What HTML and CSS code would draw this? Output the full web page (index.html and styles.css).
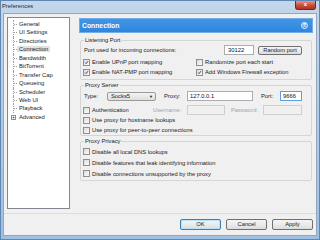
FILE: index.html
```html
<!DOCTYPE html>
<html lang="en">
<head>
  <meta charset="UTF-8">
  <title>Preferences</title>
  <link rel="stylesheet" href="styles.css">
</head>
<body>
<div class="window">
  <div class="titlebar">
    <span class="title">Preferences</span>
    <span class="close">x</span>
  </div>
  <div class="client">
    <div class="body">
      <ul class="tree">
        <li><span>General</span></li>
        <li><span>UI Settings</span></li>
        <li><span>Directories</span></li>
        <li><span class="sel">Connection</span></li>
        <li><span>Bandwidth</span></li>
        <li><span>BitTorrent</span></li>
        <li><span>Transfer Cap</span></li>
        <li><span>Queueing</span></li>
        <li><span>Scheduler</span></li>
        <li><span>Web UI</span></li>
        <li><span>Playback</span></li>
        <li class="last"><span class="plus">+</span><span>Advanced</span></li>
      </ul>

      <div class="page">
        <div class="pageHead">
          <span>Connection</span>
          <span class="help">?</span>
        </div>

        <!--监听端口-->
        <fieldset class="group listen">
          <legend>Listening Port</legend>
          <div class="row r1">
            <span class="lbl portLbl">Port used for incoming connections:</span>
            <input class="txt portBox" type="text" value="30122">
            <button class="btn randBtn">Random port</button>
          </div>
          <div class="row r2">
            <label class="chk col1"><span class="box on"><svg viewBox="0 0 7 7"><path d="M1.5 3.6 L3 5.1 L5.6 1.6"/></svg></span>Enable UPnP port mapping</label>
            <label class="chk"><span class="box"></span>Randomize port each start</label>
          </div>
          <div class="row r3">
            <label class="chk col1"><span class="box on"><svg viewBox="0 0 7 7"><path d="M1.5 3.6 L3 5.1 L5.6 1.6"/></svg></span>Enable NAT-PMP port mapping</label>
            <label class="chk"><span class="box on"><svg viewBox="0 0 7 7"><path d="M1.5 3.6 L3 5.1 L5.6 1.6"/></svg></span>Add Windows Firewall exception</label>
          </div>
        </fieldset>

        <!--代理服务器-->
        <fieldset class="group proxy">
          <legend>Proxy Server</legend>
          <div class="row typeRow">
            <span class="lbl typeLbl">Type:</span>
            <span class="combo">Socks5<span class="arrow">&#9660;</span></span>
            <span class="lbl proxyLbl">Proxy:</span>
            <input class="txt hostBox" type="text" value="127.0.0.1">
            <span class="lbl pLbl">Port:</span>
            <input class="txt focus pBox" type="text" value="9666">
          </div>
          <div class="row authRow">
            <label class="chk authChk"><span class="box"></span>Authentication</label>
            <span class="lbl off userLbl">Username:</span>
            <input class="txt userBox" type="text" disabled>
            <span class="lbl off passLbl">Password:</span>
            <input class="txt passBox" type="text" disabled>
          </div>
          <div class="row r4">
            <label class="chk"><span class="box"></span>Use proxy for hostname lookups</label>
          </div>
          <div class="row r4">
            <label class="chk"><span class="box"></span>Use proxy for peer-to-peer connections</label>
          </div>
        </fieldset>

        <!--隐私-->
        <fieldset class="group privacy">
          <legend>Proxy Privacy</legend>
          <div class="row r5">
            <label class="chk"><span class="box"></span>Disable all local DNS lookups</label>
          </div>
          <div class="row r5">
            <label class="chk"><span class="box"></span>Disable features that leak identifying information</label>
          </div>
          <div class="row r5">
            <label class="chk"><span class="box"></span>Disable connections unsupported by the proxy</label>
          </div>
        </fieldset>
      </div>
    </div>

    <div class="footer">
      <button class="btn okBtn">OK</button>
      <button class="btn">Cancel</button>
      <button class="btn">Apply</button>
    </div>
  </div>
</div>
</body>
</html>
```

FILE: styles.css
```css
/*初始化样式*/
* {
  box-sizing: border-box;
}
body {
  margin: 0;
  font-family: "Liberation Sans", Arial, sans-serif;
  font-size: 5.8px;
  color: #1a1a1a;
}
ul {
  margin: 0;
  padding: 0;
  list-style: none;
}
button, input {
  font-family: inherit;
  font-size: inherit;
  margin: 0;
}

/*窗口*/
.window {
  width: 320px;
  height: 240px;
  display: flex;
  flex-direction: column;
  background: linear-gradient(#c3d6ea, #b4cde6 40%, #9fc0e2);
  border: 1px solid #5f87b3;
}
.titlebar {
  height: 12px;
  display: flex;
  justify-content: space-between;
  align-items: flex-start;
  padding-left: 1px;
}
.title {
  line-height: 11px;
  font-size: 5.8px;
  color: #1c2a3a;
}
.close {
  width: 21px;
  height: 9px;
  margin-right: 3px;
  border: 1px solid #6b2a22;
  border-top: none;
  border-radius: 0 0 3px 3px;
  background: linear-gradient(#e49a8a, #c9513f 50%, #b23321);
  color: white;
  font-weight: bold;
  font-size: 6px;
  line-height: 7px;
  text-align: center;
}
.client {
  flex: 1;
  margin: 0 2px 3px 2px;
  background: #f0f0f0;
  border: 1px solid #8fa7c2;
  display: flex;
  flex-direction: column;
}
.body {
  height: 199px;
  display: flex;
  padding: 3px 3px 0 3px;
}

/*左侧树*/
.tree {
  width: 63px;
  height: 192px;
  background: white;
  border: 1px solid #828790;
  padding-top: 2px;
}
.tree li {
  position: relative;
  margin-left: 5px;
  padding-left: 5px;
  height: 8.45px;
  line-height: 8.45px;
  border-left: 1px dotted #a0a0a0;
  white-space: nowrap;
}
.tree li::before {
  content: "";
  position: absolute;
  left: 0;
  top: 4px;
  width: 3px;
  border-top: 1px dotted #a0a0a0;
}
.tree li.last {
  border-left: none;
  padding-left: 6px;
}
.tree li.last::before {
  display: none;
}
.tree .plus {
  position: absolute;
  left: -2px;
  top: 2px;
  width: 5px;
  height: 5px;
  border: 1px solid #919191;
  font-size: 5px;
  line-height: 3px;
  text-align: center;
  color: #333;
  background: white;
}
.tree .sel {
  background: #e3e3e3;
  margin-left: -2px;
  padding: 0 2px;
}

/*右侧页面*/
.page {
  flex: 1;
  margin-left: 9px;
  padding-top: 1px;
}
.pageHead {
  height: 15px;
  display: flex;
  justify-content: space-between;
  align-items: center;
  padding: 0 4px 0 2px;
  background: linear-gradient(#4396e6, #2f86dc);
  border: 1px solid #74ace6;
  color: white;
  font-weight: bold;
  font-size: 6.8px;
}
.help {
  width: 7px;
  height: 7px;
  border-radius: 50%;
  background: radial-gradient(circle at 40% 35%, #9cd0ff, #2d7fd5);
  border: 1px solid #e6f2ff;
  font-size: 4.5px;
  line-height: 5px;
  text-align: center;
}
.group {
  margin: 1px 1px 0 1px;
  padding: 0 9px 0 2px;
  border: 1px solid #d5d5d5;
  border-radius: 2px;
  min-width: 0;
}
.group legend {
  padding: 0 1px;
  margin-left: 1px;
  line-height: 8px;
  height: 8px;
}
.group.listen {
  margin-top: 3px;
  padding-top: 1px;
  padding-bottom: 2px;
}
.group.proxy {
  padding-top: 2px;
}
.group.privacy {
  padding-top: 1px;
  padding-bottom: 1px;
}

.row {
  display: flex;
  align-items: center;
  height: 10px;
  white-space: nowrap;
}
.r2 {
  margin-top: 2px;
}
.authRow {
  margin-top: 4px;
}
.r5 {
  height: 11px;
}
.lbl {
  padding-left: 1px;
}
.lbl.off {
  color: #a3a3a3;
}
.portLbl {
  width: 141px;
}
.typeLbl {
  width: 24px;
}
.proxyLbl {
  width: 24px;
  margin-left: 7px;
}
.pLbl {
  width: 20px;
  margin-left: 7px;
}
.userLbl {
  width: 35px;
}
.passLbl {
  width: 33px;
  margin-left: 5px;
}

/*复选框*/
.chk {
  display: flex;
  align-items: center;
}
.chk.col1 {
  width: 113px;
}
.chk.authChk {
  width: 69px;
}
.box {
  width: 7px;
  height: 7px;
  margin-right: 2px;
  border: 1px solid #8e8f8f;
  background: linear-gradient(135deg, #dcdcdc, #fbfbfb);
}
.box svg {
  display: block;
  width: 5px;
  height: 5px;
  fill: none;
  stroke: #2a3f63;
  stroke-width: 1.3;
}

/*输入框*/
.txt {
  height: 10px;
  padding: 0 2px;
  border: 1px solid #abadb3;
  background: white;
  color: #111;
  outline: none;
}
.txt:disabled {
  border-color: #cfcfcf;
  background: #f0f0f0;
}
.txt.focus {
  border-color: #5b9fe0;
}
.portBox {
  width: 30px;
  padding-left: 3px;
}
.hostBox {
  width: 66px;
}
.pBox {
  width: 22px;
}
.userBox {
  width: 38px;
}
.passBox {
  width: 39px;
}
.combo {
  width: 49px;
  height: 9px;
  display: flex;
  justify-content: space-between;
  align-items: center;
  padding: 0 2px 0 3px;
  border: 1px solid #9a9a9a;
  border-radius: 2px;
  background: linear-gradient(#f4f4f4, #dedede);
}
.arrow {
  font-size: 4px;
}

/*按钮*/
.btn {
  height: 9px;
  padding: 0;
  border: 1px solid #707070;
  border-radius: 2px;
  background: linear-gradient(#f4f4f4, #ebebeb 50%, #dcdcdc);
  color: #1a1a1a;
  line-height: 7px;
}
.randBtn {
  width: 44px;
  margin-left: 4px;
}
.footer {
  flex: 1;
  display: flex;
  justify-content: flex-end;
  gap: 5px;
  padding: 5px 3px 0 0;
  border-top: 1px solid #dcdcdc;
}
.footer .btn {
  width: 41px;
  height: 11px;
  line-height: 9px;
}
.footer .okBtn {
  border-color: #3c7fb1;
  box-shadow: inset 0 0 0 1px #b9e3fa;
}
```
